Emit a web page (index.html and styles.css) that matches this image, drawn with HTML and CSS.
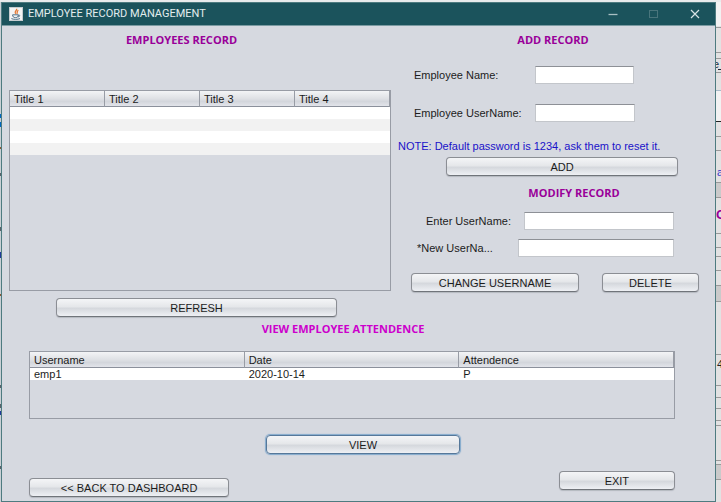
FILE: index.html
```html
<!DOCTYPE html>
<html lang="en">
<head>
<meta charset="utf-8">
<title>Employee Record Management</title>
<link rel="stylesheet" href="styles.css">
</head>
<body>
<div class="desktop">
  <svg class="behind" width="1" height="500" viewBox="0 0 1 500" aria-hidden="true">
    <rect width="1" height="500" fill="#c9d0d5"/>
    <path d="M0 112h1v4h-1zM0 120h1v5h-1z" fill="#0067c0"/>
    <path d="M0 145h1v2h-1zM0 292h1v2h-1z" fill="#8a5a35"/>
    <path d="M0 171h1v3h-1zM0 225h1v4h-1zM0 383h1v3h-1zM0 402h1v4h-1zM0 464h1v3h-1z" fill="#59626a"/>
    <path d="M0 250h1v6h-1zM0 409h1v4h-1z" fill="#203a9a"/>
  </svg>
  <main class="window">
    <header class="titlebar">
      <svg class="java" width="14" height="14" viewBox="0 0 14 14" aria-hidden="true">
        <rect x="0.5" y="0.5" width="13" height="13" fill="#f3f4f4" stroke="#c6cdd0"/>
        <path d="M7.6 1.8C8.5 3.4 4.8 4 6.6 6.8M9.4 3.3C7.4 4.4 8.9 5.2 7.8 6.8" fill="none" stroke="#e37a36" stroke-width="1.3"/>
        <path d="M3.6 7.8h5.7c0 1.8-.7 2.8-2.8 2.8s-2.9-1-2.9-2.8zM9.3 8.2c2.2-.5 1.8 1.6-.3 1.7M2.4 11.6c2 1 6.5 1 8.6 0" fill="none" stroke="#4f7188"/>
      </svg>
      <h1 class="title">EMPLOYEE RECORD MANAGEMENT</h1>
      <div class="controls">
        <button class="control" aria-label="Minimize"><svg width="10" height="10" viewBox="0 0 10 10"><path d="M0.5 5.5h9" stroke="#a9bfc3" stroke-width="1.3"/></svg></button>
        <button class="control" aria-label="Maximize" disabled><svg width="10" height="10" viewBox="0 0 10 10"><rect x="0.5" y="1.5" width="8" height="7" fill="none" stroke="#49757c"/></svg></button>
        <button class="control" aria-label="Close"><svg width="10" height="10" viewBox="0 0 10 10"><path d="M1 1l8 8M9 1l-8 8" stroke="#d7e2e4" stroke-width="1.2"/></svg></button>
      </div>
    </header>

    <div class="top">
      <section class="employees">
        <h2 class="heading">EMPLOYEES RECORD</h2>
        <div class="panel panel-employees">
          <table class="grid">
            <thead><tr><th>Title 1</th><th>Title 2</th><th>Title 3</th><th>Title 4</th></tr></thead>
            <tbody>
              <tr><td></td><td></td><td></td><td></td></tr>
              <tr><td></td><td></td><td></td><td></td></tr>
              <tr><td></td><td></td><td></td><td></td></tr>
              <tr><td></td><td></td><td></td><td></td></tr>
            </tbody>
          </table>
        </div>
        <button class="btn refresh">REFRESH</button>
      </section>

      <section class="forms">
        <h2 class="heading">ADD RECORD</h2>
        <div class="field add-name"><label for="name">Employee Name:</label><input id="name" type="text"></div>
        <div class="field add-user"><label for="user">Employee UserName:</label><input id="user" type="text"></div>
        <p class="note">NOTE: Default password is 1234, ask them to reset it.</p>
        <button class="btn add">ADD</button>
        <h2 class="heading modify">MODIFY RECORD</h2>
        <div class="field enter-user"><label for="old">Enter UserName:</label><input id="old" type="text"></div>
        <div class="field new-user"><label for="new">*New UserNa...</label><input id="new" type="text"></div>
        <div class="actions">
          <button class="btn">CHANGE USERNAME</button>
          <button class="btn">DELETE</button>
        </div>
      </section>
    </div>

    <section class="attendance">
      <h2 class="heading view-heading">VIEW EMPLOYEE ATTENDENCE</h2>
      <div class="panel panel-attendance">
        <table class="grid">
          <thead><tr><th>Username</th><th>Date</th><th>Attendence</th></tr></thead>
          <tbody><tr><td>emp1</td><td>2020-10-14</td><td>P</td></tr></tbody>
        </table>
      </div>
      <button class="btn view">VIEW</button>
      <div class="footer">
        <button class="btn back">&lt;&lt; BACK TO DASHBOARD</button>
        <button class="btn exit">EXIT</button>
      </div>
    </section>
  </main>
  <svg class="behind" width="5" height="500" viewBox="0 0 5 500" aria-hidden="true">
    <rect width="5" height="500" fill="#e2e2e2"/>
    <path d="M0 0h5v24h-5zM0 89h5v31h-5z" fill="#f2f2f2"/>
    <path d="M0 25h5M0 50h5M0 56h5M0 70h5M0 134h5M0 148h5M0 180h5M0 195h5M0 231h5M0 245h5M0 254h5M0 268h5M0 283h5M0 299h5M0 352h5M0 383h5M0 395h5M0 406h5M0 418h5M0 423h5M0 458h5M0 462h5M0 477h5" transform="translate(0 .5)" stroke="#999" fill="none"/>
    <path d="M0 181h5v14h-5zM0 284h5v15h-5zM0 463h5v14h-5z" fill="#cacaca"/>
    <path d="M0 119.5h5M2 67.5h3" stroke="#222"/>
    <path d="M0 88.5h5" stroke="#a9bac8"/>
    <text class="glimpse" x="-3" y="66" fill="#222c44">e_</text>
    <text class="glimpse" x="1" y="174" fill="#3b35c8">a</text>
    <text class="glimpse glimpse-bold" x="0" y="217" fill="#990099">C</text>
    <text class="glimpse" x="1" y="366" fill="#222">4</text>
  </svg>
</div>
</body>
</html>
```
FILE: styles.css
```css
* { box-sizing: border-box; }

body {
  margin: 0;
  background: #e9ebec;
  color: #1c1c1c;
  font: 11px/14px "Liberation Sans", sans-serif;
}

.desktop {
  display: grid;
  grid-template-columns: 1px minmax(0, 1fr) 5px;
  min-height: 100vh;
  padding-top: 2px;
}

.behind { overflow: hidden; }

.glimpse { font-size: 11px; }
.glimpse-bold { font-size: 13px; font-weight: bold; }

.window {
  display: flex;
  flex-direction: column;
  border: 1px solid #4e7b80;
  background: #d6d9e0;
}

.titlebar {
  display: flex;
  align-items: center;
  height: 23px;
  padding-left: 7px;
  background: #1b535c;
  border-bottom: 1px solid #7b9ba2;
}

.title {
  flex: 1;
  margin: 0 0 0 5px;
  color: #e3edee;
  font: 11px/14px Roboto, sans-serif;
}

.controls { display: flex; }

.control {
  display: grid;
  place-items: center;
  width: 41px;
  height: 22px;
  padding: 0;
  border: 0;
  background: none;
}

.top {
  display: grid;
  grid-template-columns: minmax(0, 389fr) minmax(0, 324fr);
}

.employees, .forms, .attendance {
  display: flex;
  flex-direction: column;
}

.employees { padding-left: 7px; }

.heading {
  margin: 0;
  color: #990099;
  font: bold 11px/28px "Open Sans", sans-serif;
  text-align: center;
}

.employees .heading { padding-right: 37px; }

.panel {
  border: 1px solid #989ca5;
  overflow: hidden;
}

.panel-employees {
  height: 201px;
  margin-top: 36px;
}

.grid {
  width: 100%;
  border-collapse: separate;
  border-spacing: 0;
  table-layout: fixed;
}

.grid th {
  height: 16px;
  padding: 0 4px;
  border-right: 1px solid #989ca5;
  border-bottom: 1px solid #8b909b;
  background: linear-gradient(#f3f4f6, #dfe1e5 50%, #d3d6dc 70%, #e2e4ea);
  font-weight: normal;
  line-height: 14px;
  text-align: left;
}

.grid td {
  height: 12px;
  padding: 0 4px;
  background: #fff;
  line-height: 12px;
}

.grid tr:nth-child(even) td { background: #f2f2f2; }

.btn {
  height: 19px;
  padding: 0 4px;
  border: 1px solid #8b8e94;
  border-bottom-color: #70747a;
  border-radius: 4px;
  background: linear-gradient(#f4f5f7, #e5e7ea 45%, #d5d8dd 55%, #eef0f4);
  box-shadow: 0 1px 1px #b4b8bf;
  color: #1c1c1c;
  font: 11px/14px "Liberation Sans", sans-serif;
}

.refresh { margin: 7px 54px 0 47px; }

.field {
  display: flex;
  align-items: center;
}

.field input {
  flex: 1;
  min-width: 0;
  height: 18px;
  padding: 0 4px;
  border: 1px solid #c3c6cb;
  border-top-color: #8d9096;
  background: #fff;
  font: 11px/14px "Liberation Sans", sans-serif;
}

.add-name { margin: 12px 81px 0 23px; }
.add-user { margin: 20px 80px 0 23px; }
.add-name label, .add-user label { width: 121px; }

.note {
  margin: 17px 0 4px 7px;
  color: #1a12c9;
  white-space: nowrap;
}

.add { margin: 0 37px 0 55px; }

.forms .modify {
  margin: 7px 0 8px 42px;
  line-height: 20px;
}

.enter-user { margin: 1px 41px 0 35px; }
.enter-user label { width: 98px; }
.new-user { margin: 9px 41px 0 26px; }
.new-user label { width: 101px; }

.actions {
  display: grid;
  grid-template-columns: 168fr 97fr;
  gap: 23px;
  margin: 16px 16px 0 20px;
}

.attendance { padding: 0 40px 4px 27px; }

.view-heading {
  padding-right: 18px;
  color: #cc00cc;
  line-height: 24px;
}

.panel-attendance {
  height: 68px;
  margin-top: 10px;
}

.view {
  align-self: center;
  width: 30%;
  margin: 16px 0 0 22px;
  border-color: #56789a;
  box-shadow: 0 0 1px 1px #82a9cc;
}

.footer {
  display: flex;
  justify-content: space-between;
  align-items: flex-start;
  margin-top: 17px;
}

.back {
  width: 31%;
  margin-top: 7px;
}

.exit { width: 18%; }
```
